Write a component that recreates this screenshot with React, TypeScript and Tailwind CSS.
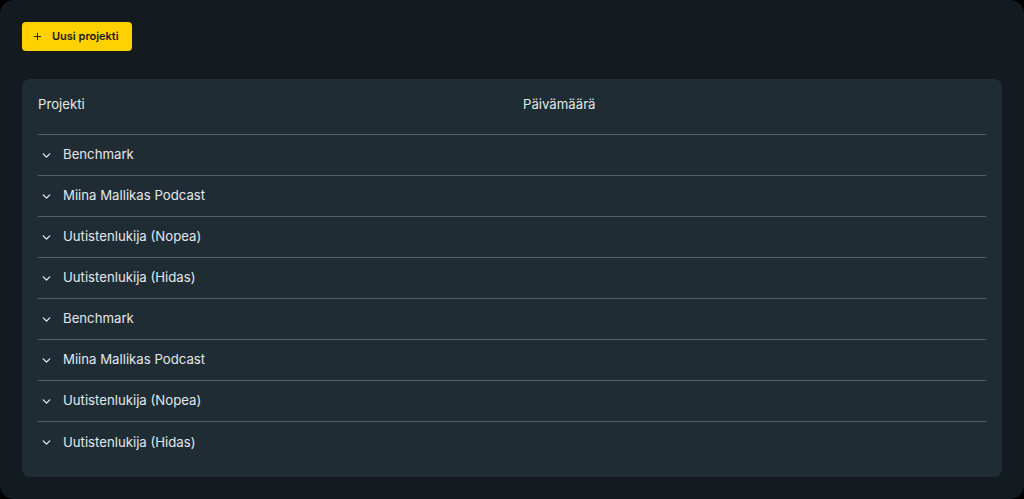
import { ChevronDown, Plus } from "lucide-react";

const projects = [
  "Benchmark",
  "Miina Mallikas Podcast",
  "Uutistenlukija (Nopea)",
  "Uutistenlukija (Hidas)",
  "Benchmark",
  "Miina Mallikas Podcast",
  "Uutistenlukija (Nopea)",
  "Uutistenlukija (Hidas)",
];

export default function App() {
  return (
    <div className="h-[499px] w-[1024px] bg-black" style={{ fontFamily: "Inter, 'Noto Sans', sans-serif" }}>
      <div className="flex h-full flex-col rounded-[14px] bg-[#131a20] px-[22px] pt-[22px]">
        <div className="flex">
          <button className="flex h-[29px] items-center gap-[9px] rounded-[4px] bg-[#ffd100] pl-[10px] pr-[13px] text-[11px] font-semibold text-[#1a1a1a]">
            <Plus size={11} strokeWidth={2} />
            Uusi projekti
          </button>
        </div>

        <div className="mt-[28px] rounded-[8px] bg-[#202c34] px-4 pb-[14px] pt-[15px]">
          <div className="flex h-[41px] border-b border-[#4e626d] text-[13.2px] leading-5 text-[#e3e8eb]">
            <div className="w-[485px]">Projekti</div>
            <div>Päivämäärä</div>
          </div>
          {projects.map((name, i) => (
            <div
              key={i}
              className={`flex h-[41px] items-center text-[13.2px] text-[#e3e8eb] ${
                i < projects.length - 1 ? "border-b border-[#4e626d]" : ""
              }`}
            >
              <ChevronDown size={13} strokeWidth={2.5} className="ml-[2px] text-[#e3e8eb]" />
              <span className="ml-[10px]">{name}</span>
            </div>
          ))}
        </div>
      </div>
    </div>
  );
}
